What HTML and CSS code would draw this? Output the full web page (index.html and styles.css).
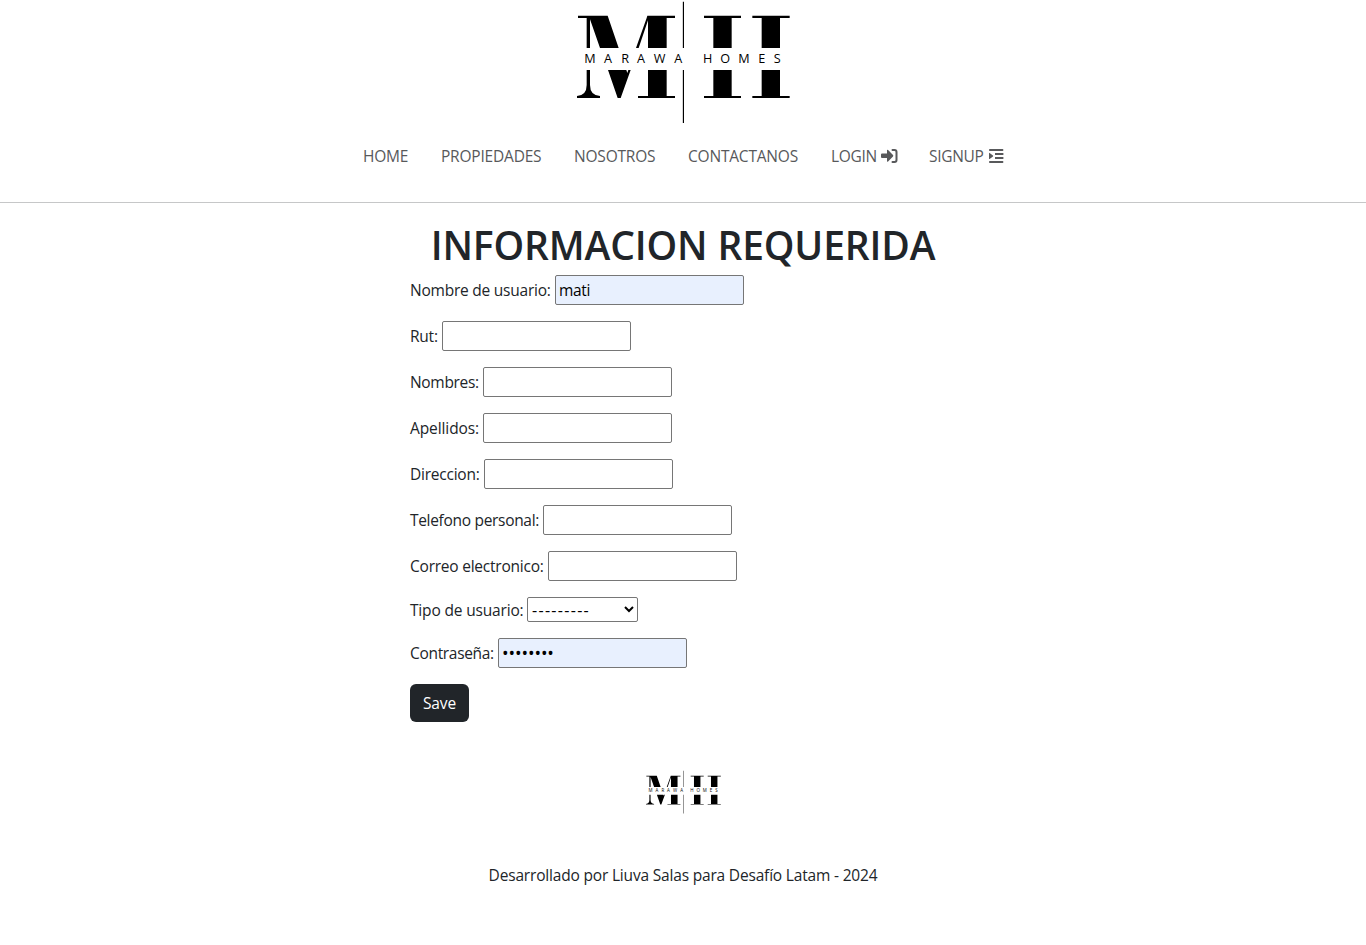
FILE: index.html
```html
<!DOCTYPE html>
<html lang="es">
<head>
<meta charset="utf-8">
<title>Marawa Homes</title>
<link rel="stylesheet" href="styles.css">
</head>
<body>
<header class="header">
  <svg class="logo" viewBox="0 0 750 390" role="img" aria-label="Marawa Homes">
    <g id="brand">
      <path d="M54 47H143L176 144H120L90 58V144H80V54H54ZM262 47H345V54H320V144H264V61L236 144H228L260 54ZM432 47H543V54H515V144H460V54H432ZM577 47H689V54H660V144H605V54H577Z"/>
      <path d="M80 210H90V255Q90 286 120 288V294H51V288Q80 286 80 255ZM144 210H199L202 219L205 210H212L182 294H173ZM264 210H320V288H345V294H234V288H264ZM460 210H515V288H543V294H432V288H460ZM605 210H660V288H689V294H577V288H605Z"/>
      <path d="M368.500 5H372V144H368.500ZM368.500 210H372V369H368.500Z"/>
      <text class="logo-text" y="189" x="73 132 184 231 281 343 429 481 535 595 641">MARAWAHOMES</text>
    </g>
  </svg>
  <nav class="nav">
    <a class="nav-link w-home">HOME</a>
    <a class="nav-link w-prop">PROPIEDADES</a>
    <a class="nav-link w-nos">NOSOTROS</a>
    <a class="nav-link w-con">CONTACTANOS</a>
    <a class="nav-link w-log"><span class="t-log">LOGIN</span><svg class="icon icon-login" viewBox="0 0 17 16"><path d="M1 5.500H6V2.500Q6 1.200 7.100 2.100L12 7Q12.600 7.800 12 8.500L7.100 13.400Q6 14.300 6 13V10H1Q0 10 0 9V6.500Q0 5.500 1 5.500Z"/><path class="stroke" d="M11.500 2H13.500Q15.500 2 15.500 4V12Q15.500 14 13.500 14H11.500"/></svg></a>
    <a class="nav-link w-sign"><span class="t-sign">SIGNUP</span><svg class="icon icon-signup" viewBox="0 0 15 16"><path d="M.8 1H13.600Q14.400 1 14.400 2T13.600 3H.8Q0 3 0 2T.8 1ZM6 5H14.400V7H6ZM6 9H14.400V11H6ZM.8 13H13.600Q14.400 13 14.400 14T13.600 15H.8Q0 15 0 14T.8 13ZM0 5.200Q0 4.600 .6 5L4 7.600Q4.400 8 4 8.400L.6 11Q0 11.300 0 10.800Z"/></svg></a>
  </nav>
</header>
<main class="main">
  <h1 class="title">INFORMACION REQUERIDA</h1>
  <form class="form">
    <div class="row"><label class="label l-user">Nombre de usuario:</label><input class="field filled" type="text" value="mati"></div>
    <div class="row"><label class="label l-rut">Rut:</label><input class="field" type="text"></div>
    <div class="row"><label class="label l-nom">Nombres:</label><input class="field" type="text"></div>
    <div class="row"><label class="label l-ape">Apellidos:</label><input class="field" type="text"></div>
    <div class="row"><label class="label l-dir">Direccion:</label><input class="field" type="text"></div>
    <div class="row"><label class="label l-tel">Telefono personal:</label><input class="field" type="text"></div>
    <div class="row"><label class="label l-cor">Correo electronico:</label><input class="field" type="text"></div>
    <div class="row"><label class="label l-tipo">Tipo de usuario:</label><select class="select"><option>---------</option></select></div>
    <div class="row"><label class="label l-pass">Contraseña:</label><input class="field filled password" type="password" value="12345678"></div>
    <button class="save" type="button">Save</button>
  </form>
</main>
<footer class="footer">
  <svg class="logo-small" viewBox="0 0 750 390" role="img" aria-label="Marawa Homes"><use href="#brand"/></svg>
  <p class="credit">Desarrollado por Liuva Salas para Desafío Latam - 2024</p>
</footer>
</body>
</html>
```
FILE: styles.css
```css
* { box-sizing: border-box; }
body { margin: 0; background: #fff; color: #212529; font: 16px/24px "Open Sans", "Noto Sans", sans-serif; }
.header { height: 203px; border-bottom: 1px solid #c6c7c8; }
.logo { display: block; width: 250px; height: 130px; margin-left: 560px; }
.logo-text { font: 38px "Open Sans", sans-serif; }
.nav { display: flex; gap: 32px; padding: 14px 0 0 363px; }
.nav-link { display: flex; align-items: center; flex: none; height: 24px; color: #58595b; white-space: nowrap; font-size: 15.5px; line-height: 25px; letter-spacing: -.2px; }
.w-home { width: 46px; }
.w-prop { width: 101px; }
.w-nos { width: 82px; }
.w-con { width: 111px; }
.w-log { width: 66px; }
.w-sign { width: 75px; }
.w-log, .w-sign { letter-spacing: -.3px; }
.t-log { flex: none; width: 50px; }
.t-sign { flex: none; width: 60px; }
.icon { flex: none; height: 16px; fill: #58595b; }
.icon-login { width: 17px; }
.icon-signup { width: 15px; }
.stroke { fill: none; stroke: #58595b; stroke-width: 2; stroke-linecap: round; }
.title { margin: 0; padding-top: 18px; height: 72px; text-align: center; font-size: 39px; line-height: 48px; font-weight: 600; white-space: nowrap; letter-spacing: -.15px; }
.form { display: flex; flex-direction: column; align-items: flex-start; gap: 16px; padding-left: 410px; }
.row { display: flex; align-items: center; }
.label { flex: none; white-space: nowrap; font-size: 15.5px; letter-spacing: -.23px; }
.l-user { width: 145px; }
.l-rut { width: 32px; }
.l-nom { width: 73px; letter-spacing: -.32px; }
.l-ape { width: 73px; letter-spacing: -.1px; }
.l-dir { width: 74px; }
.l-tel { width: 133px; letter-spacing: -.31px; }
.l-cor { width: 138px; }
.l-tipo { width: 117px; letter-spacing: -.17px; }
.l-pass { width: 88px; letter-spacing: -.32px; }
.field { width: 189px; height: 30px; margin: 0; padding: 1px 3px; border: 1px solid #767676; border-radius: 2px; background: #fff; color: #000; font: inherit; }
.filled { background: #e8f0fe; font-size: 15.5px; letter-spacing: -.3px; }
.password { font-size: 17.5px; letter-spacing: -.1px; }
.select { width: 111px; height: 25px; margin: 0; border: 1px solid #767676; border-radius: 2px; padding: 0; background: #fff; color: #000; font: inherit; letter-spacing: 1.3px; }
.save { width: 59px; height: 38px; padding: 0; border: 0; border-radius: 6px; background: #212529; color: #fff; font: inherit; font-size: 15.5px; letter-spacing: -.1px; }
.footer { padding-top: 48px; }
.logo-small { display: block; width: 88px; height: 46px; margin-left: 639.5px; }
.credit { margin: 47px 0 0; text-align: center; font-size: 15.5px; letter-spacing: -.18px; }
```
